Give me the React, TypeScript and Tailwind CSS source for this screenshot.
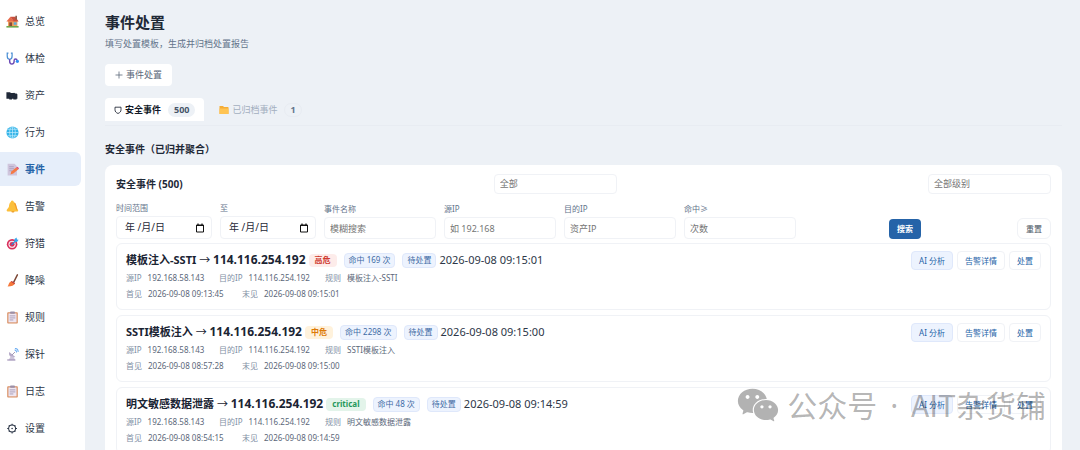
import type { ReactNode } from 'react'
import { AiFillWechat } from 'react-icons/ai'

const clipboard = (
  <>
    <rect x="3" y="3" width="26" height="28" rx="2" fill="#d98f63" />
    <rect x="6" y="6" width="20" height="22" fill="#eee6f2" />
    <rect x="10" y="1" width="12" height="6" rx="2" fill="#9b8fa8" />
    <path d="M9 12h14M9 17h14M9 22h9" stroke="#9d90ad" strokeWidth="2" />
  </>
)

const icons: Record<string, ReactNode> = {
  home: (
    <>
      <path d="M5 14h23v15H5z" fill="#f0a35c" />
      <path d="M1 16 11 4l9 12z" fill="#e8694a" />
      <path d="M11 4h12l8 12H19z" fill="#c94f3d" />
      <path d="M23 2h4v9h-4z" fill="#8d5a4b" />
      <path d="M8 18h7v11H8z" fill="#8a4a35" />
      <path d="M19 18h7v6h-7z" fill="#5aa9dc" />
      <path d="M1 27h30v4H1z" fill="#6fa84b" />
    </>
  ),
  health: (
    <>
      <path d="M6 3H3v7c0 5 2 8 6 8s6-3 6-8V3h-3" fill="none" stroke="#4a8fd5" strokeWidth="3" />
      <path d="M9 18v5c0 9 11 9 11 0v-2c0-5 7-5 7 0" fill="none" stroke="#6b4ab5" strokeWidth="3.5" />
      <circle cx="28" cy="23" r="4" fill="#2f8df0" />
    </>
  ),
  asset: <path d="M1 8h9l2 2h6l2-1 3 2h3l2 2v11h-2v2h-8v-2h-3v2H8v-2H1z" fill="#202938" />,
  globe: (
    <>
      <circle cx="16" cy="16" r="15" fill="#35b4e8" />
      <g fill="none" stroke="#c9f0ff" strokeWidth="1.6">
        <ellipse cx="16" cy="16" rx="7" ry="15" />
        <path d="M16 1v30M1 16h30M4 8h24M4 24h24" />
      </g>
    </>
  ),
  event: (
    <>
      <path d="M4 2h17l6 6v23H4z" fill="#cfc5dc" />
      <path d="M8 9h11M8 14h12M8 19h8" stroke="#a99bbd" strokeWidth="2" />
      <path d="m11 28 2-7 12-10 5 5-12 10z" fill="#f47a45" />
      <path d="m25 11 3-2 4 4-2 3z" fill="#e2456b" />
    </>
  ),
  bell: (
    <>
      <circle cx="17" cy="27" r="4" fill="#e58a1f" />
      <path d="M15 1c3 0 4 2 4 4 6 3 6 9 7 14l4 6c0 2-1 3-3 3H4c-2 0-3-2-2-4l5-7c1-5 1-10 5-12 0-2 1-4 3-4z" fill="#fcbf3b" />
      <path d="M21 8c4 4 3 10 6 16" stroke="#f39a27" strokeWidth="3" fill="none" />
    </>
  ),
  target: (
    <>
      <circle cx="15" cy="18" r="13" fill="#d92f5c" />
      <circle cx="15" cy="18" r="9" fill="#f6dce5" />
      <circle cx="15" cy="18" r="6" fill="#d92f5c" />
      <path d="m14 19 9-9" stroke="#2c8fd6" strokeWidth="3" />
      <path d="m20 12 1-7 5-4 1 5 4 1-4 5z" fill="#3aa7ec" />
    </>
  ),
  broom: (
    <>
      <path d="M28 2 19 20" stroke="#7a4432" strokeWidth="3.5" strokeLinecap="round" />
      <path d="M13 18l9 5c-2 6-8 8-18 8 3-4 3-11 9-13z" fill="#f5793b" />
      <path d="m14 17 8 5-1 3-9-6z" fill="#c23f3f" />
    </>
  ),
  rule: clipboard,
  log: clipboard,
  probe: (
    <>
      <path d="M8 10c-3 9 5 16 15 12z" fill="#b6aac8" />
      <path d="m15 17 7-7" stroke="#8d7fa6" strokeWidth="2" />
      <path d="M12 20 6 30h17l-5-9z" fill="#cdc3da" />
      <path d="M3 28h20v3H3z" fill="#a699bb" />
      <path d="M21 5c3 0 5 2 5 6M22 1c5 0 8 4 8 9" fill="none" stroke="#6eaef2" strokeWidth="2.5" />
    </>
  ),
  settings: (
    <>
      <circle cx="15" cy="16" r="8.500" fill="none" stroke="#2d3748" strokeWidth="2.5" />
      <circle cx="15" cy="16" r="2" fill="#2d3748" />
      <path d="M15 4v4M15 24v4M3 16h4M23 16h4M7 8l2 2M21 22l2 2M23 8l-2 2M9 22l-2 2" stroke="#2d3748" strokeWidth="2.5" />
    </>
  ),
}

const nav = [
  { icon: 'home', label: '总览' },
  { icon: 'health', label: '体检' },
  { icon: 'asset', label: '资产' },
  { icon: 'globe', label: '行为' },
  { icon: 'event', label: '事件' },
  { icon: 'bell', label: '告警' },
  { icon: 'target', label: '狩猎' },
  { icon: 'broom', label: '降噪' },
  { icon: 'rule', label: '规则' },
  { icon: 'probe', label: '探针' },
  { icon: 'log', label: '日志' },
  { icon: 'settings', label: '设置' },
]

const events = [
  {
    name: '模板注入-SSTI',
    level: '高危',
    levelClass: 'bg-[#fdecea] text-[#cf3a30]',
    hits: 169,
    first: '2026-09-08 09:13:45',
    last: '2026-09-08 09:15:01',
  },
  {
    name: 'SSTI模板注入',
    level: '中危',
    levelClass: 'bg-[#fff2dc] text-[#dd7a06]',
    hits: 2298,
    first: '2026-09-08 08:57:28',
    last: '2026-09-08 09:15:00',
  },
  {
    name: '明文敏感数据泄露',
    level: 'critical',
    levelClass: 'bg-[#e3f4ea] text-[#23985a]',
    hits: 48,
    first: '2026-09-08 08:54:15',
    last: '2026-09-08 09:14:59',
  },
]

const filters = [
  { id: 'name', label: '事件名称', placeholder: '模糊搜索' },
  { id: 'src', label: '源IP', placeholder: '如 192.168' },
  { id: 'dst', label: '目的IP', placeholder: '资产IP' },
  { id: 'hits', label: '命中≥', placeholder: '次数' },
]

function Sidebar() {
  return (
    <nav className="w-[85px] shrink-0 bg-white pt-1">
      <ul className="flex flex-col gap-[3px]">
        {nav.map(({ icon, label }) => (
          <li key={label}>
            <a
              href="#"
              className={
                icon === 'event'
                  ? 'mr-1 flex h-[34px] items-center gap-1.5 rounded-r-md bg-[#e6eefa] pl-1.5 font-bold text-[#2563a8]'
                  : 'mr-1 flex h-[34px] items-center gap-1.5 pl-1.5'
              }
            >
              <svg viewBox="0 0 32 32" className="size-[13px]">
                {icons[icon]}
              </svg>
              {label}
            </a>
          </li>
        ))}
      </ul>
    </nav>
  )
}

function DateField({ id, label }: { id: string; label: string }) {
  return (
    <div className="flex w-24 flex-col gap-0.5">
      <label htmlFor={id} className="text-[8px] leading-3 text-[#64748b]">
        {label}
      </label>
      <div className="flex h-[23px] items-center rounded border border-[#f0f2f6] pr-1.5 pl-2">
        <input
          id={id}
          placeholder="年 /月/日"
          className="w-full min-w-0 outline-none placeholder:text-[#1f2937]"
        />
        <svg viewBox="0 0 10 10" className="size-2.5 shrink-0" fill="none" stroke="#111">
          <path d="M1.5 2h7v7h-7z" />
          <path d="M1 2.5h8M3 .5v2M7 .5v2" strokeWidth="1.2" />
        </svg>
      </div>
    </div>
  )
}

function Filters() {
  return (
    <form className="mt-2 flex items-end justify-between">
      <div className="flex items-end gap-2">
        <DateField id="from" label="时间范围" />
        <DateField id="to" label="至" />
        {filters.map(({ id, label, placeholder }) => (
          <div key={id} className="flex w-28 flex-col gap-0.5">
            <label htmlFor={id} className="text-[8px] leading-3 text-[#64748b]">
              {label}
            </label>
            <input
              id={id}
              placeholder={placeholder}
              className="h-[22px] w-full rounded border border-[#f0f2f6] px-[5px] text-[9px] outline-none placeholder:text-[#757575]"
            />
          </div>
        ))}
      </div>
      <div className="flex w-[162px] items-end justify-between">
        <button type="button" className="h-5 rounded bg-[#2563a8] px-2 text-[8px] font-bold text-white">
          搜索
        </button>
        <button type="button" className="h-[21px] rounded-md border border-[#f0f2f6] px-2 text-[8px] text-[#4b5563]">
          重置
        </button>
      </div>
    </form>
  )
}

function Meta({ label, value }: { label: string; value: string }) {
  return (
    <div className="flex gap-1.5 whitespace-nowrap">
      <dt className="text-[#8290a5]">{label}</dt>
      <dd className="text-[#5b6779]">{value}</dd>
    </div>
  )
}

function EventCard({ event }: { event: (typeof events)[number] }) {
  return (
    <li className="flex h-[67px] items-start justify-between rounded-md border border-[#f0f2f6] px-[9px] pt-[7px]">
      <div>
        <div className="flex h-[18px] items-center whitespace-nowrap">
          <h3 className="text-[11px] font-bold text-[#1a2433]">
            {event.name} <span className="font-normal">→</span> <span className="text-xs">114.116.254.192</span>
          </h3>
          <span className={`ml-[3px] flex h-[13px] items-center rounded px-1.5 text-[8px] font-bold ${event.levelClass}`}>
            {event.level}
          </span>
          <span className="ml-[7px] flex h-[15px] items-center rounded border border-[#dfe8fb] bg-[#edf3fe] px-1 text-[8px] text-[#3d6ba5]">
            命中 {event.hits} 次
          </span>
          <span className="ml-[7px] flex h-[15px] items-center rounded border border-[#dfe8fb] bg-[#edf3fe] px-1 text-[8px] text-[#3d6ba5]">
            待处置
          </span>
          <time className="ml-[3px] text-[11px]">{event.last}</time>
        </div>
        <dl className="mt-px grid grid-cols-[93px_106px_auto] text-[8px] leading-4">
          <Meta label="源IP" value="192.168.58.143" />
          <Meta label="目的IP" value="114.116.254.192" />
          <Meta label="规则" value={event.name} />
        </dl>
        <dl className="grid grid-cols-[116px_auto] text-[8px] leading-4">
          <Meta label="首见" value={event.first} />
          <Meta label="末见" value={event.last} />
        </dl>
      </div>
      <div className="flex gap-1 text-[8px] text-[#2563a8]">
        <button type="button" className="h-[19px] rounded border border-[#dfe8fb] bg-[#edf3fe] px-[7px]">
          AI 分析
        </button>
        <button type="button" className="h-[19px] rounded border border-[#f0f2f6] px-[7px]">
          告警详情
        </button>
        <button type="button" className="h-[19px] rounded border border-[#f0f2f6] px-[7px]">
          处置
        </button>
      </div>
    </li>
  )
}

export default function App() {
  return (
    <div className="relative flex h-screen overflow-hidden bg-[#edf1f6] font-['Noto_Sans','Noto_Sans_CJK_SC',sans-serif] text-[10px] text-[#2d3748]">
      <Sidebar />
      <main className="min-w-0 flex-1 pt-3 pr-[18px] pl-5">
        <h1 className="text-[15px] leading-5 font-bold text-[#1f2937]">事件处置</h1>
        <p className="mt-1 text-[9px] leading-4 text-[#64748b]">填写处置模板，生成并归档处置报告</p>
        <button
          type="button"
          className="mt-3 flex h-[22px] items-center gap-[3px] rounded bg-white px-2.5 text-[9px] text-[#5b6779]"
        >
          <svg viewBox="0 0 8 8" className="size-2" stroke="currentColor" strokeWidth="0.8">
            <path d="M4 .5v7M.5 4h7" />
          </svg>
          事件处置
        </button>

        <div className="mt-3 flex gap-1.5 border-b border-[#e8ecf2] pb-1 text-[9px]">
          <button type="button" className="flex h-[23px] items-center gap-[3px] rounded-t bg-white px-[9px] font-bold text-[#111827]">
            <svg viewBox="0 0 8 8" className="size-2" fill="none" stroke="currentColor" strokeWidth="0.8">
              <path d="M1 1.2h6v2.600C7 5.600 6 6.600 4 7.500 2 6.600 1 5.600 1 3.800z" />
            </svg>
            安全事件
            <span className="ml-1 rounded-full bg-[#edf1f6] px-1.5 leading-[14px] text-[#475569]">500</span>
          </button>
          <button type="button" className="flex h-[23px] items-center gap-[3px] px-[9px] text-[#a3afbf]">
            <svg viewBox="0 0 10 10" className="size-2.5">
              <path d="M.5 1h3.500l1 1h4q.5 0 .5.500v6q0 .5-.5.500H1q-.5 0-.5-.5z" fill="#f5ad36" />
              <path d="M.5 3.500h9v5q0 .5-.5.500H1q-.5 0-.5-.5z" fill="#ffc453" />
            </svg>
            已归档事件
            <span className="ml-1 rounded-full border border-[#e8ecf2] px-[5px] leading-3 font-bold text-[#64748b]">1</span>
          </button>
        </div>

        <h2 className="mt-[15px] leading-4 font-bold text-[#1f2937]">安全事件（已归并聚合）</h2>

        <section className="mt-2 rounded-lg bg-white px-[11px] pt-[9px] pb-3">
          <div className="flex items-center justify-between">
            <h3 className="font-bold text-[#1f2937]">安全事件 (500)</h3>
            <select
              aria-label="状态"
              className="h-5 w-[123px] appearance-none rounded border border-[#f0f2f6] px-[5px] text-[9px] text-[#757575]"
            >
              <option>全部</option>
            </select>
            <select
              aria-label="级别"
              className="h-5 w-[123px] appearance-none rounded border border-[#f0f2f6] px-[5px] text-[9px] text-[#757575]"
            >
              <option>全部级别</option>
            </select>
          </div>
          <Filters />
          <ul className="mt-1 flex flex-col gap-[5px]">
            {events.map((event) => (
              <EventCard key={event.name} event={event} />
            ))}
          </ul>
        </section>
      </main>

      <div className="pointer-events-none absolute right-[34px] bottom-[22px] flex items-center gap-1.5 text-black/30">
        <AiFillWechat className="size-[46px]" />
        <span className="font-['Noto_Sans_CJK_SC',sans-serif] text-[30px] leading-10 whitespace-nowrap">
          公众号<span className="px-[5px] font-['Noto_Sans']"> · </span>AIT杂货铺
        </span>
      </div>
    </div>
  )
}
